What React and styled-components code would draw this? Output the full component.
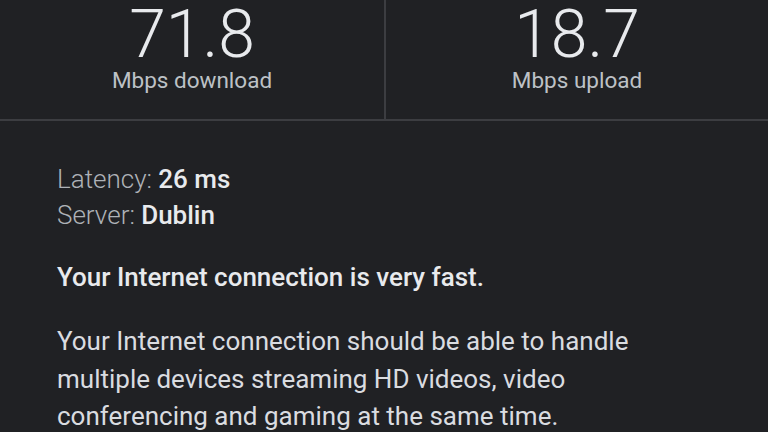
import React from 'react';
import styled, { createGlobalStyle } from 'styled-components';

const GlobalStyle = createGlobalStyle`
  html, body {
    margin: 0;
    padding: 0;
    background: #202124;
    overflow: hidden;
  }
  body {
    font-family: Roboto, "Liberation Sans", sans-serif;
  }
`;

const Screen = styled.div`
  width: 768px;
  height: 432px;
  background: #202124;
  color: #e8eaed;
  overflow: hidden;
`;

const Stats = styled.div`
  display: grid;
  grid-template-columns: 384px 1fr;
  height: 119px;
  border-bottom: 2px solid #3c3d41;
`;

const StatCell = styled.div`
  display: flex;
  flex-direction: column;
  align-items: center;
  justify-content: flex-end;
  padding-bottom: 27px;
  border-left: ${(p) => (p.divider ? '2px solid #3c3d41' : 'none')};
`;

const Speed = styled.div`
  font-size: 66px;
  font-weight: 300;
  line-height: 66px;
  color: #e8eaed;
`;

const Unit = styled.div`
  font-size: 22.5px;
  line-height: 24px;
  color: #bdc1c6;
`;

const Details = styled.div`
  padding: 40px 0 0 57px;
`;

const InfoLine = styled.div`
  font-size: 26px;
  line-height: 36px;
  font-weight: 300;
  color: #aeb2b7;

  b {
    font-weight: 500;
    color: #e8eaed;
  }
`;

const Verdict = styled.p`
  margin: 29px 0 0;
  font-size: 26px;
  line-height: 30px;
  font-weight: 500;
  color: #e8eaed;
`;

const Description = styled.p`
  margin: 31px 0 0;
  max-width: 600px;
  font-size: 26px;
  line-height: 37.5px;
  color: #dadce0;
`;

export default function App() {
  return (
    <Screen>
      <GlobalStyle />
      <Stats>
        <StatCell>
          <Speed>71.8</Speed>
          <Unit>Mbps download</Unit>
        </StatCell>
        <StatCell divider>
          <Speed>18.7</Speed>
          <Unit>Mbps upload</Unit>
        </StatCell>
      </Stats>
      <Details>
        <InfoLine>
          Latency: <b>26 ms</b>
        </InfoLine>
        <InfoLine>
          Server: <b>Dublin</b>
        </InfoLine>
        <Verdict>Your Internet connection is very fast.</Verdict>
        <Description>
          Your Internet connection should be able to handle multiple devices
          streaming HD videos, video conferencing and gaming at the same time.
        </Description>
      </Details>
    </Screen>
  );
}
